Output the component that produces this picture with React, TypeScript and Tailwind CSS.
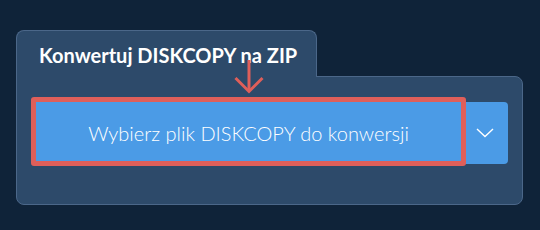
export default function App() {
  return (
    <div className="min-h-screen w-full bg-[#0f2339] pl-4 pt-[30px] font-['Lato','Noto_Sans',sans-serif]">
      <div className="relative flex w-[507px] flex-col">
        {/* tab */}
        <div className="relative z-10 h-[47px] w-[301px] rounded-t-lg border border-b-0 border-[#4b6789] bg-[#2d4a6a] pl-[22px] pt-3">
          <h1 className="text-[20px] font-bold leading-6 text-white">Konwertuj DISKCOPY na ZIP</h1>
        </div>

        {/* body */}
        <div className="-mt-px rounded-b-lg rounded-tr-lg border border-[#4b6789] bg-[#2d4a6a] pb-10 pl-[19px] pr-[14px] pt-[25px]">
          <div className="relative z-20 flex h-[62px]">
            <button className="flex h-full w-[425px] items-center justify-center bg-[#4b9be6] text-[20px] font-light leading-6 text-white">
              Wybierz plik DISKCOPY do konwersji
            </button>
            <button className="flex h-full w-[47px] items-center justify-center rounded-r-[4px] bg-[#4b9be6]">
              <svg width="18" height="10" viewBox="0 0 18 10" fill="none">
                <polyline points="1,1 9,8.5 17,1" stroke="white" strokeWidth="1.4" />
              </svg>
            </button>

            {/* highlight */}
            <div className="pointer-events-none absolute left-[-5px] top-[-5px] h-[69px] w-[435px] rounded-[3px] border-[5px] border-[#df5f5a]" />
            <svg
              className="pointer-events-none absolute left-[198px] top-[-42px]"
              width="30"
              height="34"
              viewBox="0 0 30 34"
              fill="none"
            >
              <line x1="15" y1="0" x2="15" y2="31" stroke="#df5f5a" strokeWidth="3" />
              <polyline points="1.5,18 15,31.5 28.5,18" stroke="#df5f5a" strokeWidth="3" />
            </svg>
          </div>
        </div>
      </div>
    </div>
  );
}
